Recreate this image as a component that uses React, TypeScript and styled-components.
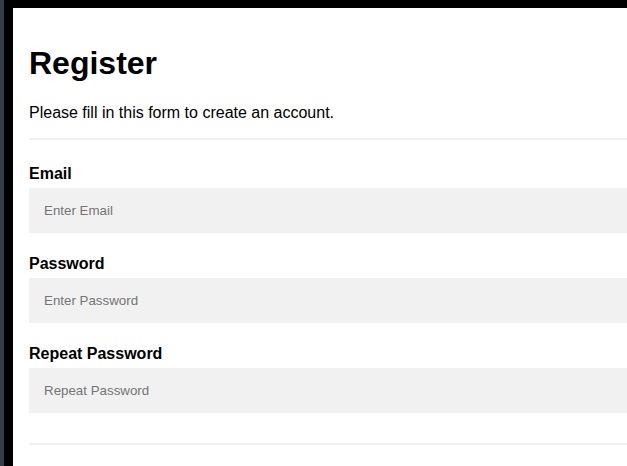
import styled, { createGlobalStyle } from "styled-components";

const GlobalStyle = createGlobalStyle`
  html, body {
    margin: 0;
    padding: 0;
    height: 100%;
    overflow: hidden;
    background: #000000;
  }
  #root {
    height: 100%;
  }
  * {
    box-sizing: border-box;
  }
`;

const Shell = styled.div`
  display: flex;
  height: 100%;
  font-family: "Liberation Sans", Arial, sans-serif;
`;

const SideStrip = styled.div`
  flex: 0 0 4px;
  background: #323e48;
`;

const Page = styled.div`
  flex: 1;
  min-width: 0;
  padding: 8px 0 0 9px;
  background: #000000;
`;

const Container = styled.form`
  width: 700px;
  min-height: 100%;
  padding: 16px;
  background: #ffffff;
  color: #000000;
`;

const Heading = styled.h1`
  font-size: 32px;
  font-weight: 700;
  margin: 21px 0 22px;
`;

const Intro = styled.p`
  font-size: 16px;
  margin: 16px 0;
`;

const Divider = styled.hr`
  border: 1px solid #f1f1f1;
  margin: 8px 0 25px;
`;

const FieldGroup = styled.div`
  display: flex;
  flex-direction: column;
`;

const Label = styled.label`
  display: block;
  font-size: 16px;
  font-weight: 700;
  line-height: 18px;
`;

const Field = styled.input`
  display: block;
  width: 100%;
  padding: 15px;
  margin: 5px 0 22px;
  border: none;
  background: #f1f1f1;
  font-family: "Liberation Sans", Arial, sans-serif;
  font-size: 13.33px;
  line-height: 15px;
  outline: none;

  &::placeholder {
    color: #757575;
  }
`;

const fields = [
  { id: "email", label: "Email", placeholder: "Enter Email", type: "text" },
  { id: "psw", label: "Password", placeholder: "Enter Password", type: "password" },
  { id: "psw-repeat", label: "Repeat Password", placeholder: "Repeat Password", type: "password" },
];

export default function App() {
  return (
    <>
      <GlobalStyle />
      <Shell>
        <SideStrip />
        <Page>
          <Container onSubmit={(e) => e.preventDefault()}>
            <Heading>Register</Heading>
            <Intro>Please fill in this form to create an account.</Intro>
            <Divider />
            <FieldGroup>
              {fields.map((f) => (
                <FieldGroup key={f.id}>
                  <Label htmlFor={f.id}>{f.label}</Label>
                  <Field id={f.id} name={f.id} type={f.type} placeholder={f.placeholder} />
                </FieldGroup>
              ))}
            </FieldGroup>
            <Divider />
          </Container>
        </Page>
      </Shell>
    </>
  );
}
